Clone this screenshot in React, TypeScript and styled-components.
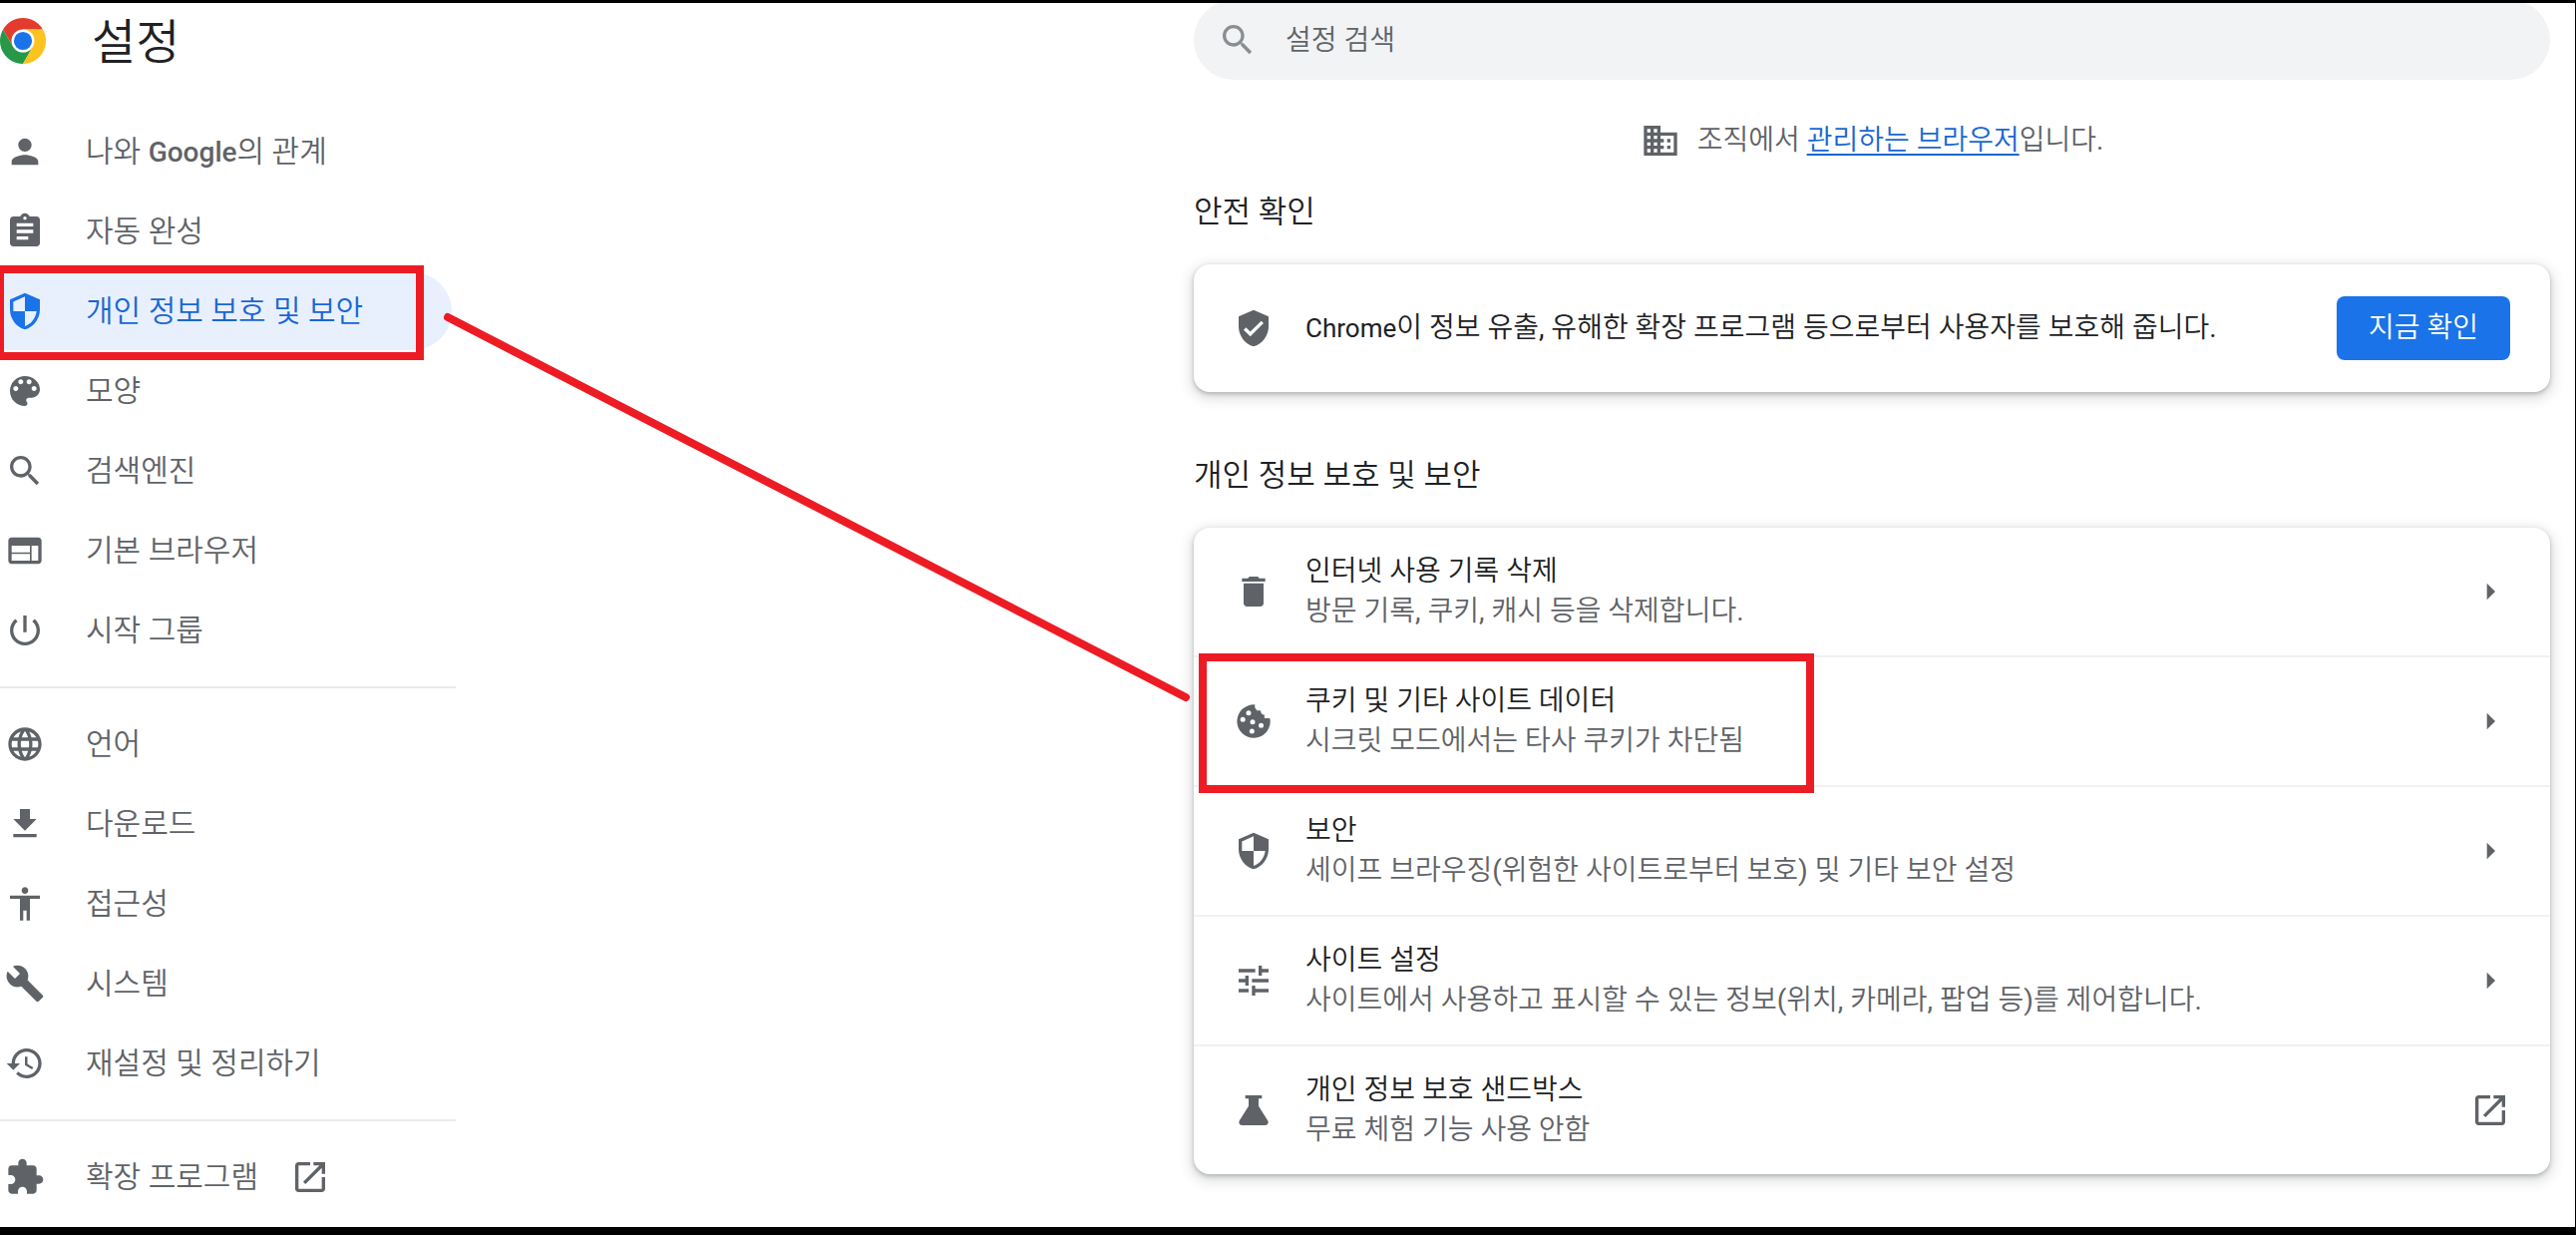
import React from 'react';
import styled, { createGlobalStyle } from 'styled-components';

const GlobalStyle = createGlobalStyle`
  *, *::before, *::after { box-sizing: border-box; }
  body {
    margin: 0;
    background: #fff;
    color: #202124;
    font-family: Roboto, "Noto Sans CJK KR DemiLight", "Noto Sans CJK KR", sans-serif;
    font-size: 28px;
    font-weight: 400;
    line-height: 40px;
  }
`;

const Page = styled.div`
  position: relative;
  min-height: 100vh;
  border: solid #000;
  border-width: 3px 1px 8px 0;
  overflow: hidden;
`;

const Columns = styled.div`
  display: flex;
  justify-content: space-between;
  gap: 48px;
  margin-top: -3px;
`;

const Sidebar = styled.aside`
  flex: 0 0 457px;
`;

const Brand = styled.header`
  display: flex;
  align-items: center;
  gap: 46px;
  height: 113px;
  padding-bottom: 32px;
`;

const BrandTitle = styled.h1`
  margin: 0;
  padding-top: 4px;
  font-size: 48px;
  font-weight: 400;
  line-height: 64px;
`;

const NavGroup = styled.ul`
  display: flex;
  flex-direction: column;
  gap: 2px;
  margin: 0;
  padding: 0;
  list-style: none;

  & + & {
    margin-top: 17px;
    padding-top: 17px;
    border-top: 2px solid #e8eaed;
  }
`;

const NavItem = styled.li`
  position: relative;
  padding-right: 4px;
`;

const NavLink = styled.a<{ $active?: boolean }>`
  display: flex;
  align-items: center;
  height: 78px;
  padding-left: 5px;
  border-radius: 0 39px 39px 0;
  background: ${(p) => (p.$active ? '#e8f0fe' : 'transparent')};
  color: ${(p) => (p.$active ? '#1967d2' : '#5f6368')};
  font-size: 30px;
  text-decoration: none;

  svg { color: ${(p) => (p.$active ? '#1a73e8' : '#5f6368')}; }
`;

const NavLabel = styled.span`
  padding: 0 32px 0 41px;
`;

const NavLatin = styled.span`
  font-size: 28px;
  font-weight: 500;
`;

const Latin = styled.span`
  font-size: 26px;
`;

const IconSvg = styled.svg`
  flex: none;
  width: 40px;
  height: 40px;
  fill: currentColor;
`;

const Main = styled.main`
  flex: 0 1 1360px;
  min-width: 0;
  margin-right: 25px;
`;

const SearchBar = styled.label`
  display: flex;
  align-items: center;
  gap: 28px;
  height: 80px;
  padding: 0 24px;
  border-radius: 40px;
  background: #f1f3f4;
  color: #8a8d91;
`;

const SearchInput = styled.input`
  flex: 1;
  min-width: 0;
  padding: 2px 0 0;
  border: 0;
  outline: 0;
  background: transparent;
  color: #202124;
  font: inherit;

  &::placeholder { color: #5f6368; opacity: 1; }
`;

const Managed = styled.div`
  display: flex;
  justify-content: center;
  gap: 17px;
  padding-top: 41px;
  color: #5f6368;

  p { margin: 0; }
  a { color: #1967d2; text-underline-offset: 4px; }
`;

const SectionTitle = styled.h2`
  margin: 0;
  padding: 32px 0;
  font-size: 31px;
  font-weight: 400;
  line-height: 40px;
`;

const Card = styled.section`
  border-radius: 16px;
  background: #fff;
  box-shadow: 0 2px 4px rgba(60, 64, 67, 0.3), 0 4px 12px 4px rgba(60, 64, 67, 0.15);

  & + ${SectionTitle} { padding-top: 64px; }
`;

const Row = styled.div`
  position: relative;
  display: flex;
  align-items: center;
  gap: 32px;
  min-height: 128px;
  padding: 0 40px;
  color: #5f6368;

  & + & {
    min-height: 130px;
    border-top: 2px solid #f1f1f2;
  }
`;

const RowText = styled.div`
  flex: 1;
  min-width: 0;
`;

const RowTitle = styled.div`
  color: #202124;
`;

const IconButton = styled.button`
  display: flex;
  padding: 0;
  border: 0;
  background: none;
  color: inherit;
`;

const CheckButton = styled.button`
  width: 174px;
  height: 64px;
  padding: 0;
  border: 0;
  border-radius: 8px;
  background: #1a73e8;
  color: #fff;
  font: inherit;
`;

const Marker = styled.span`
  position: absolute;
  z-index: 1;
  border: 8px solid #ed1c24;
  pointer-events: none;
`;

const NavMarker = styled(Marker)`
  inset: -7px 32px -10px -4px;
`;

const RowMarker = styled(Marker)`
  top: -4px;
  bottom: -8px;
  left: 5px;
  width: 617px;
`;

const Connector = styled.svg`
  position: absolute;
  top: -3px;
  left: 0;
  width: 1196px;
  height: 710px;
  pointer-events: none;
`;

const paths = {
  person: 'M12 12c2.21 0 4-1.79 4-4s-1.79-4-4-4-4 1.79-4 4 1.79 4 4 4zm0 2c-2.67 0-8 1.34-8 4v2h16v-2c0-2.66-5.33-4-8-4z',
  assignment: 'M19 3h-4.18C14.4 1.84 13.3 1 12 1c-1.3 0-2.4.84-2.82 2H5c-1.1 0-2 .9-2 2v14c0 1.1.9 2 2 2h14c1.1 0 2-.9 2-2V5c0-1.1-.9-2-2-2zm-7 0c.55 0 1 .45 1 1s-.45 1-1 1-1-.45-1-1 .45-1 1-1zm2 14H7v-2h7v2zm3-4H7v-2h10v2zm0-4H7V7h10v2z',
  security: 'M12 1L3 5v6c0 5.55 3.84 10.74 9 12 5.16-1.26 9-6.45 9-12V5l-9-4zm0 10.99h7c-.53 4.12-3.28 7.79-7 8.94V12H5V6.3l7-3.11v8.8z',
  palette: 'M12 3c-4.97 0-9 4.03-9 9s4.03 9 9 9c.83 0 1.5-.67 1.5-1.5 0-.39-.15-.74-.39-1.01-.23-.26-.38-.61-.38-.99 0-.83.67-1.5 1.5-1.5H16c2.76 0 5-2.24 5-5 0-4.42-4.03-8-9-8zm-5.5 9c-.83 0-1.5-.67-1.5-1.5S5.67 9 6.5 9 8 9.67 8 10.5 7.33 12 6.5 12zm3-4C8.67 8 8 7.33 8 6.5S8.67 5 9.5 5s1.5.67 1.5 1.5S10.33 8 9.5 8zm5 0c-.83 0-1.5-.67-1.5-1.5S13.67 5 14.5 5s1.5.67 1.5 1.5S15.33 8 14.5 8zm3 4c-.83 0-1.5-.67-1.5-1.5S16.67 9 17.5 9s1.5.67 1.5 1.5-.67 1.5-1.5 1.5z',
  search: 'M15.5 14h-.79l-.28-.27C15.41 12.59 16 11.11 16 9.5 16 5.91 13.09 3 9.5 3S3 5.91 3 9.5 5.91 16 9.5 16c1.61 0 3.09-.59 4.23-1.57l.27.28v.79l5 4.99L20.49 19l-4.99-5zm-6 0C7.01 14 5 11.99 5 9.5S7.01 5 9.5 5 14 7.01 14 9.5 11.99 14 9.5 14z',
  web: 'M20 4H4c-1.1 0-1.99.9-1.99 2L2 18c0 1.1.9 2 2 2h16c1.1 0 2-.9 2-2V6c0-1.1-.9-2-2-2zm-5 14H4v-4h11v4zm0-5H4V9h11v4zm5 5h-4V9h4v9z',
  power: 'M13 3h-2v10h2V3zm4.83 2.17l-1.42 1.42C17.99 7.86 19 9.81 19 12c0 3.87-3.13 7-7 7s-7-3.13-7-7c0-2.19 1.01-4.14 2.58-5.42L6.17 5.17C4.23 6.82 3 9.26 3 12c0 4.97 4.03 9 9 9s9-4.03 9-9c0-2.74-1.23-5.18-3.17-6.83z',
  language: 'M11.99 2C6.47 2 2 6.48 2 12s4.47 10 9.99 10C17.52 22 22 17.52 22 12S17.52 2 11.99 2zm6.93 6h-2.95c-.32-1.25-.78-2.45-1.38-3.56 1.84.63 3.37 1.91 4.33 3.56zM12 4.04c.83 1.2 1.48 2.53 1.91 3.96h-3.82c.43-1.43 1.08-2.76 1.91-3.96zM4.26 14C4.1 13.36 4 12.69 4 12s.1-1.36.26-2h3.38c-.08.66-.14 1.32-.14 2 0 .68.06 1.34.14 2H4.26zm.82 2h2.95c.32 1.25.78 2.45 1.38 3.56-1.84-.63-3.37-1.9-4.33-3.56zm2.95-8H5.08c.96-1.66 2.49-2.93 4.33-3.56C8.81 5.55 8.35 6.75 8.03 8zM12 19.96c-.83-1.2-1.48-2.53-1.91-3.96h3.82c-.43 1.43-1.08 2.76-1.91 3.96zM14.34 14H9.66c-.09-.66-.16-1.32-.16-2 0-.68.07-1.35.16-2h4.68c.09.65.16 1.32.16 2 0 .68-.07 1.34-.16 2zm.25 5.56c.6-1.11 1.06-2.31 1.38-3.56h2.95c-.96 1.65-2.49 2.93-4.33 3.56zM16.36 14c.08-.66.14-1.32.14-2 0-.68-.06-1.34-.14-2h3.38c.16.64.26 1.31.26 2s-.1 1.36-.26 2h-3.38z',
  download: 'M19 9h-4V3H9v6H5l7 7 7-7zM5 18v2h14v-2H5z',
  accessibility: 'M12 2c1.1 0 2 .9 2 2s-.9 2-2 2-2-.9-2-2 .9-2 2-2zm9 7h-6v13h-2v-6h-2v6H9V9H3V7h18v2z',
  build: 'M22.7 19l-9.1-9.1c.9-2.3.4-5-1.5-6.9-2-2-5-2.4-7.4-1.3L9 6 6 9 1.6 4.7C.4 7.1.9 10.1 2.9 12.1c1.9 1.9 4.6 2.4 6.9 1.5l9.1 9.1c.4.4 1 .4 1.4 0l2.3-2.3c.5-.4.5-1.1.1-1.4z',
  restore: 'M13 3c-4.97 0-9 4.03-9 9H1l3.89 3.89.07.14L9 12H6c0-3.87 3.13-7 7-7s7 3.13 7 7-3.13 7-7 7c-1.93 0-3.68-.79-4.94-2.06l-1.42 1.42C8.27 19.99 10.51 21 13 21c4.97 0 9-4.03 9-9s-4.03-9-9-9zm-1 5v5l4.28 2.54.72-1.21-3.5-2.08V8H12z',
  extension: 'M20.5 11H19V7c0-1.1-.9-2-2-2h-4V3.5C13 2.12 11.88 1 10.5 1S8 2.12 8 3.5V5H4c-1.1 0-1.99.9-1.99 2v3.8H3.5c1.49 0 2.7 1.21 2.7 2.7s-1.21 2.7-2.7 2.7H2V20c0 1.1.9 2 2 2h3.8v-1.5c0-1.49 1.21-2.7 2.7-2.7 1.49 0 2.7 1.21 2.7 2.7V22H17c1.1 0 2-.9 2-2v-4h1.5c1.38 0 2.5-1.12 2.5-2.5S21.88 11 20.5 11z',
  external: 'M19 19H5V5h7V3H5c-1.11 0-2 .9-2 2v14c0 1.1.89 2 2 2h14c1.1 0 2-.9 2-2v-7h-2v7zM14 3v2h3.59l-9.83 9.83 1.41 1.41L19 6.41V10h2V3h-7z',
  domain: 'M12 7V3H2v18h20V7H12zM6 19H4v-2h2v2zm0-4H4v-2h2v2zm0-4H4V9h2v2zm0-4H4V5h2v2zm4 12H8v-2h2v2zm0-4H8v-2h2v2zm0-4H8V9h2v2zm0-4H8V5h2v2zm10 12h-8v-2h2v-2h-2v-2h2v-2h-2V9h8v10zm-2-8h-2v2h2v-2zm0 4h-2v2h2v-2z',
  verified: 'M12 1L3 5v6c0 5.55 3.84 10.74 9 12 5.16-1.26 9-6.45 9-12V5l-9-4zm-2 16l-4-4 1.41-1.41L10 14.17l6.59-6.59L18 9l-8 8z',
  trash: 'M6 19c0 1.1.9 2 2 2h8c1.1 0 2-.9 2-2V7H6v12zM19 4h-3.5l-1-1h-5l-1 1H5v2h14V4z',
  cookie: 'M12.9 2.05A10 10 0 1 0 22 11.2a3 3 0 0 1-.3-1h-3.2V8.1a2.4 2.4 0 0 1-2.2-2.6h-2.2A3 3 0 0 1 12.9 2.05z',
  tune: 'M3 17v2h6v-2H3zM3 5v2h10V5H3zm10 16v-2h8v-2h-8v-2h-2v6h2zM7 9v2H3v2h4v2h2V9H7zm14 4v-2H11v2h10zm-6-4h2V7h4V5h-4V3h-2v6z',
  flask: 'M20.5 18.1L15 9.5V5h2V3H7v2h2v4.5l-5.5 8.6C2.7 19.4 3.6 21 5.1 21h13.8c1.5 0 2.4-1.6 1.6-2.9z',
  arrow: 'M10 7l5 5-5 5z',
};

type IconName = keyof typeof paths;

const Icon = ({ name }: { name: IconName }) => (
  <IconSvg viewBox="0 0 24 24" aria-hidden="true">
    <path d={paths[name]} />
    {name === 'cookie' && (
      <g fill="#fff">
        <circle cx="9" cy="7" r="1.5" />
        <circle cx="5.5" cy="11" r="1.5" />
        <circle cx="11.4" cy="12.5" r="1.5" />
        <circle cx="16.5" cy="14.5" r="1.5" />
        <circle cx="11" cy="18" r="1.5" />
      </g>
    )}
  </IconSvg>
);

const LogoSvg = styled.svg`
  flex: none;
  width: 46px;
  height: 46px;
`;

const ChromeLogo = () => (
  <LogoSvg viewBox="0 0 48 48" aria-hidden="true">
    <path fill="#e33b2e" d="M24 12h20.78A24 24 0 0 0 3.22 12l10.39 18z" />
    <path fill="#279847" d="M34.39 30L24 48A24 24 0 0 1 3.22 12l10.39 18z" />
    <path fill="#fcc31e" d="M24 12h20.78A24 24 0 0 1 24 48l10.39-18z" />
    <circle cx="24" cy="24" r="12" fill="#fff" />
    <circle cx="24" cy="24" r="9.5" fill="#1a73e8" />
  </LogoSvg>
);

interface NavEntry {
  icon: IconName;
  label: React.ReactNode;
  active?: boolean;
  external?: boolean;
}

const navGroups: NavEntry[][] = [
  [
    { icon: 'person', label: <>나와 <NavLatin>Google</NavLatin>의 관계</> },
    { icon: 'assignment', label: '자동 완성' },
    { icon: 'security', label: '개인 정보 보호 및 보안', active: true },
    { icon: 'palette', label: '모양' },
    { icon: 'search', label: '검색엔진' },
    { icon: 'web', label: '기본 브라우저' },
    { icon: 'power', label: '시작 그룹' },
  ],
  [
    { icon: 'language', label: '언어' },
    { icon: 'download', label: '다운로드' },
    { icon: 'accessibility', label: '접근성' },
    { icon: 'build', label: '시스템' },
    { icon: 'restore', label: '재설정 및 정리하기' },
  ],
  [{ icon: 'extension', label: '확장 프로그램', external: true }],
];

interface Setting {
  icon: IconName;
  title: string;
  detail: string;
  marked?: boolean;
  external?: boolean;
}

const settings: Setting[] = [
  { icon: 'trash', title: '인터넷 사용 기록 삭제', detail: '방문 기록, 쿠키, 캐시 등을 삭제합니다.' },
  { icon: 'cookie', title: '쿠키 및 기타 사이트 데이터', detail: '시크릿 모드에서는 타사 쿠키가 차단됨', marked: true },
  { icon: 'security', title: '보안', detail: '세이프 브라우징(위험한 사이트로부터 보호) 및 기타 보안 설정' },
  { icon: 'tune', title: '사이트 설정', detail: '사이트에서 사용하고 표시할 수 있는 정보(위치, 카메라, 팝업 등)를 제어합니다.' },
  { icon: 'flask', title: '개인 정보 보호 샌드박스', detail: '무료 체험 기능 사용 안함', external: true },
];

export default function App() {
  return (
    <>
      <GlobalStyle />
      <Page lang="ko">
        <Columns>
          <Sidebar>
            <Brand>
              <ChromeLogo />
              <BrandTitle>설정</BrandTitle>
            </Brand>
            <nav>
              {navGroups.map((group, index) => (
                <NavGroup key={index}>
                  {group.map((entry) => (
                    <NavItem key={entry.icon}>
                      <NavLink href="#" $active={entry.active}>
                        <Icon name={entry.icon} />
                        <NavLabel>{entry.label}</NavLabel>
                        {entry.external && <Icon name="external" />}
                      </NavLink>
                      {entry.active && <NavMarker />}
                    </NavItem>
                  ))}
                </NavGroup>
              ))}
            </nav>
          </Sidebar>
          <Main>
            <SearchBar>
              <Icon name="search" />
              <SearchInput type="text" placeholder="설정 검색" aria-label="설정 검색" />
            </SearchBar>
            <Managed>
              <Icon name="domain" />
              <p>조직에서 <a href="#">관리하는 브라우저</a>입니다.</p>
            </Managed>
            <SectionTitle>안전 확인</SectionTitle>
            <Card>
              <Row>
                <Icon name="verified" />
                <RowText>
                  <RowTitle>
                    <Latin>Chrome</Latin>이 정보 유출, 유해한 확장 프로그램 등으로부터 사용자를 보호해 줍니다.
                  </RowTitle>
                </RowText>
                <CheckButton type="button">지금 확인</CheckButton>
              </Row>
            </Card>
            <SectionTitle>개인 정보 보호 및 보안</SectionTitle>
            <Card>
              {settings.map((item) => (
                <Row key={item.title}>
                  <Icon name={item.icon} />
                  <RowText>
                    <RowTitle>{item.title}</RowTitle>
                    <div>{item.detail}</div>
                  </RowText>
                  <IconButton type="button" aria-label={item.title}>
                    <Icon name={item.external ? 'external' : 'arrow'} />
                  </IconButton>
                  {item.marked && <RowMarker />}
                </Row>
              ))}
            </Card>
          </Main>
        </Columns>
        <Connector viewBox="0 0 1196 710" aria-hidden="true">
          <line x1="449" y1="318" x2="1189" y2="699" stroke="#ed1c24" strokeWidth="8" strokeLinecap="round" />
        </Connector>
      </Page>
    </>
  );
}
